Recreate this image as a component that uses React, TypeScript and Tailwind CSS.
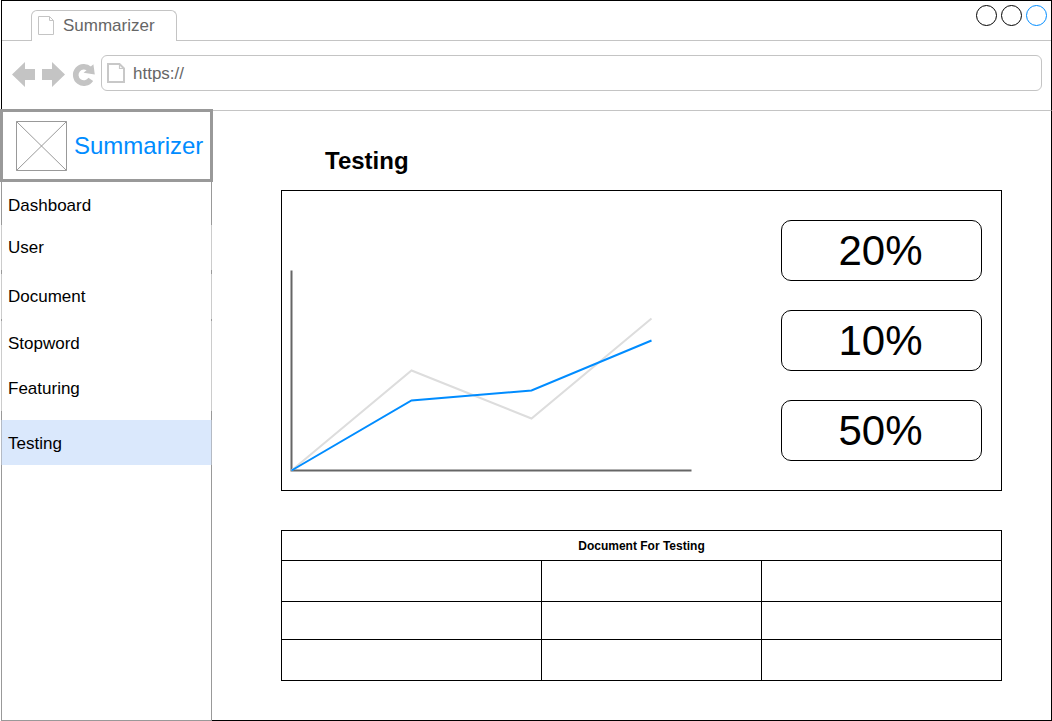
import React from "react";

type NavItem = { label: string; className: string };

const navItems: NavItem[] = [
  { label: "Dashboard", className: "h-[43px] pt-[5px] border-[#999]" },
  { label: "User", className: "h-[45px] border-[#ccc]" },
  { label: "Document", className: "mt-1 h-[45px] border-[#ccc]" },
  { label: "Stopword", className: "mt-0.5 h-[45px] border-[#ccc]" },
  { label: "Featuring", className: "h-[45px] border-[#ccc]" },
  { label: "Testing", className: "mt-[9px] h-[45px] pt-0.5 border-[#b4bac4] bg-[#dae8fc]" },
];

const stats = ["20%", "10%", "50%"];

const rowHeights = ["h-[41px]", "h-[38px]", "h-[41px]"];

function TabPageIcon() {
  return (
    <svg width="17" height="20" viewBox="0 0 17 20" fill="none" stroke="#c4c4c4" aria-hidden="true">
      <path d="M0.5 0.5H11.5L15.5 4.5V18.5H0.5Z" />
      <path d="M11.5 0.5V4.5H15.5" />
    </svg>
  );
}

function AddressPageIcon() {
  return (
    <svg width="18" height="20" viewBox="0 0 18 20" fill="none" stroke="#c8c8c8" strokeWidth="2" aria-hidden="true">
      <path d="M1 1H12.5L17 5.5V19H1Z" />
      <path d="M12.5 1V5.5H17" strokeWidth="1.2" />
    </svg>
  );
}

function Arrow({ forward = false }: { forward?: boolean }) {
  return (
    <svg width="23" height="25" viewBox="0 0 23 25" fill="#c4c4c4" aria-hidden="true">
      <path d={forward ? "M23 12.5L10 0V7H0V18H10V25Z" : "M0 12.5L13 0V7H23V18H13V25Z"} />
    </svg>
  );
}

function Reload() {
  return (
    <svg width="23" height="25" viewBox="0 0 23 25" aria-hidden="true">
      <path d="M18.8 17.4A8.2 8.2 0 1 1 17.6 7" fill="none" stroke="#c4c4c4" strokeWidth="5.6" />
      <path d="M21.4 2.2L22.8 12.6L11.6 10.8Z" fill="#c4c4c4" />
    </svg>
  );
}

function WindowButton({ label, color }: { label: string; color: string }) {
  return (
    <button type="button" aria-label={label}>
      <svg className="block" width="21" height="21" viewBox="0 0 21 21" fill="none" stroke={color} aria-hidden="true">
        <circle cx="10.5" cy="10.5" r="10" />
      </svg>
    </button>
  );
}

function Chart() {
  return (
    <svg
      className="mb-[18px] max-w-full shrink self-end"
      width="402"
      height="202"
      viewBox="0 0 402 202"
      fill="none"
      strokeWidth="2"
      role="img"
      aria-label="Testing results"
    >
      <path d="M1.5 0.5V200.5H401.5" stroke="#666" />
      <path d="M1.5 200.5L121.5 100.5L241.5 148.5L361.5 48.5" stroke="#ddd" />
      <path d="M1.5 200.5L121.5 130.5L241.5 120.5L361.5 70.5" stroke="#008cff" />
    </svg>
  );
}

export default function App() {
  return (
    <div className="flex min-h-screen flex-col bg-white font-['Liberation_Sans',Arial,sans-serif] text-[17px] leading-5 text-black">
      <header className="ml-px border-x border-t border-black">
        <div className="flex h-10 items-end justify-between border-b border-[#c4c4c4] pl-[29px]">
          <div className="-mb-px flex h-[31px] w-[146px] items-center gap-2 rounded-t-md border border-b-0 border-[#c4c4c4] bg-white pl-1.5 text-[#666]">
            <TabPageIcon />
            <span>Summarizer</span>
          </div>
          <div className="flex gap-1 self-start pt-1 pr-1">
            <WindowButton label="Minimize" color="#000" />
            <WindowButton label="Maximize" color="#000" />
            <WindowButton label="Close" color="#008cff" />
          </div>
        </div>
        <div className="flex h-[69px] items-start pt-3.5 pr-[9px] pl-2.5">
          <div className="flex h-9 shrink-0 items-center gap-[7px] pt-0.5">
            <button type="button" aria-label="Back"><Arrow /></button>
            <button type="button" aria-label="Forward"><Arrow forward /></button>
            <button type="button" aria-label="Reload"><Reload /></button>
          </div>
          <div className="ml-1.5 flex h-9 flex-1 items-center gap-2 rounded-md border border-[#c4c4c4] pl-[5px]">
            <label htmlFor="address" aria-label="Address"><AddressPageIcon /></label>
            <input
              id="address"
              aria-label="Address"
              className="w-full min-w-0 flex-1 bg-transparent pt-0.5 text-[#666] outline-none"
              type="text"
              defaultValue="https://"
            />
          </div>
        </div>
      </header>

      <div className="flex flex-1">
        <aside className="flex w-[212px] shrink-0 flex-col">
          <div className="relative -mt-px -mr-px flex h-[73px] items-center gap-[7px] border-[3px] border-[#999] bg-white pl-[13px]">
            <svg width="51" height="50" viewBox="0 0 51 50" fill="none" stroke="#999" aria-hidden="true">
              <path d="M0.5 0.5H50.5V49.5H0.5Z" />
              <path d="M0.5 0.5L50.5 49.5M50.5 0.5L0.5 49.5" />
            </svg>
            <span className="text-2xl text-[#008cff]">Summarizer</span>
          </div>
          <nav className="ml-px flex flex-1 flex-col border-x border-b border-[#999]">
            {navItems.map((item) => (
              <a
                key={item.label}
                href="#"
                aria-current={item.label === "Testing" ? "page" : undefined}
                className={`-mx-px flex items-center border-x pl-1.5 ${item.className}`}
              >
                {item.label}
              </a>
            ))}
          </nav>
        </aside>

        <main className="flex-1 border-t border-r border-b border-t-[#c4c4c4] border-r-black border-b-black pr-[49px] pb-[39px] pl-[69px]">
          <h1 className="pt-9 pl-11 text-2xl leading-7 font-bold">Testing</h1>

          <section className="mt-[15px] flex justify-between border border-black pr-[19px] pl-2">
            <Chart />
            <div className="flex w-[201px] shrink-0 flex-col gap-[29px] py-[29px]">
              {stats.map((value) => (
                <div
                  key={value}
                  className="flex h-[61px] items-center justify-center rounded-[10px] border border-black pr-0.5 text-[42px] leading-[50px]"
                >
                  {value}
                </div>
              ))}
            </div>
          </section>

          <table className="mt-[39px] w-full table-fixed border-collapse border border-black">
            <colgroup>
              <col className="w-[36.1%]" />
              <col className="w-[30.6%]" />
              <col className="w-[33.3%]" />
            </colgroup>
            <thead>
              <tr className="h-[30px]">
                <th colSpan={3} className="border border-black p-0 text-xs font-bold">
                  Document For Testing
                </th>
              </tr>
            </thead>
            <tbody>
              {rowHeights.map((height, row) => (
                <tr key={row} className={height}>
                  <td className="border border-black" />
                  <td className="border border-black" />
                  <td className="border border-black" />
                </tr>
              ))}
            </tbody>
          </table>
        </main>
      </div>
    </div>
  );
}
